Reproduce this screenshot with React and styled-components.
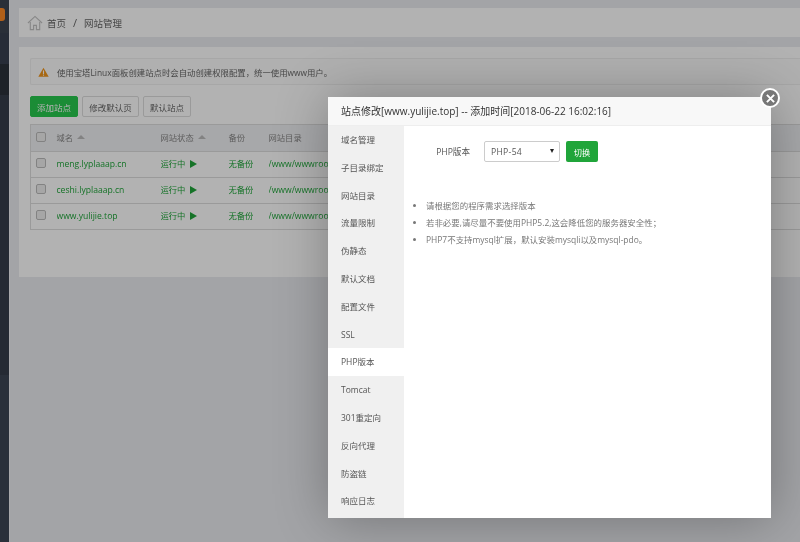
import React from "react";
import styled, { createGlobalStyle } from "styled-components";

const Global = createGlobalStyle`
    html, body {
        margin: 0;
        padding: 0;
        height: 100%;
        overflow: hidden;
        background: #eaebef;
    }
    body, select, button {
        font-family: "Open Sans", "Noto Sans CJK SC", sans-serif;
    }
    * { box-sizing: border-box; }
`;

const tabs = ["域名管理", "子目录绑定", "网站目录", "流量限制", "伪静态", "默认文档", "配置文件", "SSL", "PHP版本", "Tomcat", "301重定向", "反向代理", "防盗链", "响应日志"];
const sites = ["meng.lyplaaap.cn", "ceshi.lyplaaap.cn", "www.yulijie.top"];
const sideBlocks = [
    { h: 33, bg: "#3d4451" },
    { h: 31, bg: "#394050" },
    { h: 31, bg: "#2c323a" },
    { h: 280, bg: "#363d4a" },
    { h: 167, bg: "#3d4553" },
];

export default function App() {
    return (
        <Page>
            <Global />
            <Sidebar>
                {sideBlocks.map((b, i) => (
                    <SideBlock key={i} $h={b.h} $bg={b.bg} />
                ))}
                <Badge />
            </Sidebar>
            <Main>
                <Crumbs>
                    <svg width="16" height="16" viewBox="0 0 17 17" fill="none" stroke="#c2c2c2" strokeWidth="1.2">
                        <path d="M1 8.5 8.5 1.5 16 8.5" />
                        <path d="M3.5 7.5V15.5H7V11H10V15.5H13.5V7.5" />
                    </svg>
                    <CrumbText>首页</CrumbText>
                    <Slash>/</Slash>
                    <span>网站管理</span>
                </Crumbs>
                <Panel>
                    <Alert>
                        <svg width="11" height="10" viewBox="0 0 14 12">
                            <path d="M7 0.5 13.6 12H0.4Z" fill="#f0951c" />
                            <rect x="6.3" y="4" width="1.4" height="4.5" fill="#fff" />
                            <rect x="6.3" y="9.3" width="1.4" height="1.4" fill="#fff" />
                        </svg>
                        使用宝塔Linux面板创建站点时会自动创建权限配置，统一使用www用户。
                    </Alert>
                    <Actions>
                        <Button $primary $w={48}>添加站点</Button>
                        <Button $w={57}>修改默认页</Button>
                        <Button $w={48}>默认站点</Button>
                    </Actions>
                    <Table>
                        <thead>
                            <tr>
                                <Th $w={26}><Check /></Th>
                                <Th $w={104}>域名 <Sort /></Th>
                                <Th $w={68}>网站状态 <Sort /></Th>
                                <Th $w={40}>备份</Th>
                                <Th>网站目录</Th>
                            </tr>
                        </thead>
                        <tbody>
                            {sites.map((s) => (
                                <tr key={s}>
                                    <Td><Check /></Td>
                                    <SiteCell>{s}</SiteCell>
                                    <Td>运行中 <Play /></Td>
                                    <Td>无备份</Td>
                                    <SiteCell>/www/wwwroot/{s}</SiteCell>
                                </tr>
                            ))}
                        </tbody>
                    </Table>
                </Panel>
            </Main>
            <Shade />
            <Modal>
                <ModalTitle>站点修改[www.yulijie.top] -- 添加时间[2018-06-22 16:02:16]</ModalTitle>
                <ModalBody>
                    <Tabs>
                        {tabs.map((t) => (
                            <Tab key={t} $active={t === "PHP版本"}>{t}</Tab>
                        ))}
                    </Tabs>
                    <Content>
                        <FormRow>
                            <Label>PHP版本</Label>
                            <SelectWrap>
                                <Select defaultValue="PHP-54">
                                    <option>PHP-54</option>
                                </Select>
                            </SelectWrap>
                            <SwitchButton>切换</SwitchButton>
                        </FormRow>
                        <Notes>
                            <li>请根据您的程序需求选择版本</li>
                            <li>若非必要,请尽量不要使用PHP5.2,这会降低您的服务器安全性；</li>
                            <li>PHP7不支持mysql扩展，默认安装mysqli以及mysql-pdo。</li>
                        </Notes>
                    </Content>
                </ModalBody>
                <Close>
                    <svg width="9" height="9" viewBox="0 0 10 10" stroke="#fff" strokeWidth="2.2">
                        <path d="M1 1 9 9M9 1 1 9" />
                    </svg>
                </Close>
            </Modal>
        </Page>
    );
}

const Page = styled.div`
    position: relative;
    display: flex;
    width: 800px;
    height: 542px;
    overflow: hidden;
`;
const Sidebar = styled.aside`
    position: relative;
    width: 9px;
    flex-shrink: 0;
`;
const SideBlock = styled.div`
    height: ${(p) => p.$h}px;
    background: ${(p) => p.$bg};
`;
const Badge = styled.div`
    position: absolute;
    left: 0;
    top: 8px;
    width: 5px;
    height: 13px;
    border-radius: 0 3px 3px 0;
    background: #ff8a25;
`;
const Main = styled.main`
    flex: 1;
    padding: 8px 0 0 9px;
    border-left: 1px solid #f2f3f5;
    filter: blur(0.35px);
`;
const Crumbs = styled.nav`
    display: flex;
    align-items: center;
    height: 29px;
    padding-left: 8px;
    background: #fff;
    font-size: 9.5px;
    color: #666;
`;
const CrumbText = styled.span`
    margin-left: 4px;
`;
const Slash = styled.span`
    margin: 0 7px;
    font-size: 11px;
`;
const Panel = styled.section`
    height: 230px;
    margin-top: 10px;
    padding: 11px 0 11px 11px;
    background: #fff;
`;
const Alert = styled.div`
    display: flex;
    align-items: center;
    gap: 8px;
    height: 27px;
    padding-left: 7px;
    border: 1px solid #efefef;
    border-right: 0;
    border-radius: 2px 0 0 2px;
    background: #fcfcfc;
    font-size: 8.4px;
    color: #666;
`;
const Actions = styled.div`
    display: flex;
    gap: 4px;
    margin-top: 11px;
`;
const Button = styled.button`
    width: ${(p) => p.$w}px;
    height: 21px;
    margin: 0;
    padding: 0;
    border: 1px solid ${(p) => (p.$primary ? "#28c94e" : "#ddd")};
    border-radius: 2px;
    background: ${(p) => (p.$primary ? "#28c94e" : "#fff")};
    font-size: 8.5px;
    color: ${(p) => (p.$primary ? "#fff" : "#666")};
`;
const Table = styled.table`
    width: 100%;
    margin-top: 7px;
    border-collapse: collapse;
    table-layout: fixed;
    border: 1px solid #ddd;
    border-right: 0;
    font-size: 8.3px;
`;
const Th = styled.th`
    width: ${(p) => (p.$w ? `${p.$w}px` : "auto")};
    height: 27px;
    padding: 0 0 2px;
    background: #f0f1f4;
    border-bottom: 1px solid #ddd;
    font-weight: 400;
    text-align: left;
    color: #888;
    &:first-child {
        padding-left: 5px;
    }
`;
const Td = styled.td`
    height: 26px;
    padding: 0 0 3px;
    border-bottom: 1px solid #ddd;
    color: #20a53a;
    white-space: nowrap;
    overflow: hidden;
    &:first-child {
        padding-left: 5px;
    }
`;
const SiteCell = styled(Td)`
    padding-bottom: 1px;
    font-size: 8.6px;
`;
const Check = styled.span`
    display: block;
    width: 10px;
    height: 10px;
    border: 1px solid #bbb;
    border-radius: 2px;
    background: #eee;
`;
const Sort = styled.i`
    display: inline-block;
    margin-left: 2px;
    vertical-align: 2px;
    border: 4px solid transparent;
    border-top: 0;
    border-bottom: 4px solid #bbb;
`;
const Play = styled.i`
    display: inline-block;
    margin-left: 2px;
    vertical-align: -1px;
    border: 4px solid transparent;
    border-right: 0;
    border-left: 7px solid #20a53a;
`;
const Shade = styled.div`
    position: absolute;
    inset: 0;
    background: rgba(0, 0, 0, 0.3);
`;
const Modal = styled.div`
    position: absolute;
    left: 328px;
    top: 97px;
    display: flex;
    flex-direction: column;
    width: 443px;
    height: 421px;
    background: #fff;
    box-shadow: 1px 1px 50px rgba(0, 0, 0, 0.3);
`;
const ModalTitle = styled.div`
    height: 29px;
    flex-shrink: 0;
    padding-left: 13px;
    line-height: 29px;
    background: #f8f8f8;
    border-bottom: 1px solid #eee;
    font-size: 10px;
    color: #333;
    filter: blur(0.35px);
`;
const ModalBody = styled.div`
    display: flex;
    flex: 1;
    filter: blur(0.3px);
`;
const Tabs = styled.ul`
    width: 76px;
    margin: 0;
    padding: 0;
    list-style: none;
    background: #f0f0f0;
`;
const Tab = styled.li`
    height: 27.8px;
    padding-left: 13px;
    line-height: 27.8px;
    font-size: 8.5px;
    color: #555;
    background: ${(p) => (p.$active ? "#fff" : "transparent")};
`;
const Content = styled.div`
    flex: 1;
    padding: 15px 0 0 9px;
`;
const FormRow = styled.div`
    display: flex;
    align-items: center;
    height: 21px;
`;
const Label = styled.label`
    width: 71px;
    padding-right: 14px;
    text-align: right;
    font-size: 8.6px;
    color: #555;
`;
const SelectWrap = styled.div`
    position: relative;
    width: 76px;
    height: 21px;
    &::after {
        content: "";
        position: absolute;
        right: 6px;
        top: 8px;
        border: 2.5px solid transparent;
        border-bottom: 0;
        border-top: 4px solid #222;
    }
`;
const Select = styled.select`
    display: block;
    width: 100%;
    height: 100%;
    padding-left: 6px;
    appearance: none;
    border: 1px solid #ccc;
    border-radius: 2px;
    background: #fff;
    font-size: 8.6px;
    letter-spacing: 0.3px;
    color: #555;
`;
const SwitchButton = styled.button`
    width: 32px;
    height: 21px;
    margin-left: 6px;
    padding: 0;
    border: 0;
    border-radius: 2px;
    background: #20a53a;
    font-size: 8.2px;
    color: #fff;
`;
const Notes = styled.ul`
    margin: 35px 0 0;
    padding: 0 0 0 13px;
    font-size: 8.45px;
    color: #777;
    li {
        height: 17px;
        line-height: 17px;
    }
    li::marker {
        font-size: 8px;
    }
`;
const Close = styled.div`
    position: absolute;
    right: -9px;
    top: -9px;
    display: flex;
    align-items: center;
    justify-content: center;
    width: 20px;
    height: 20px;
    border: 2px solid #fff;
    border-radius: 50%;
    background: #777;
`;
